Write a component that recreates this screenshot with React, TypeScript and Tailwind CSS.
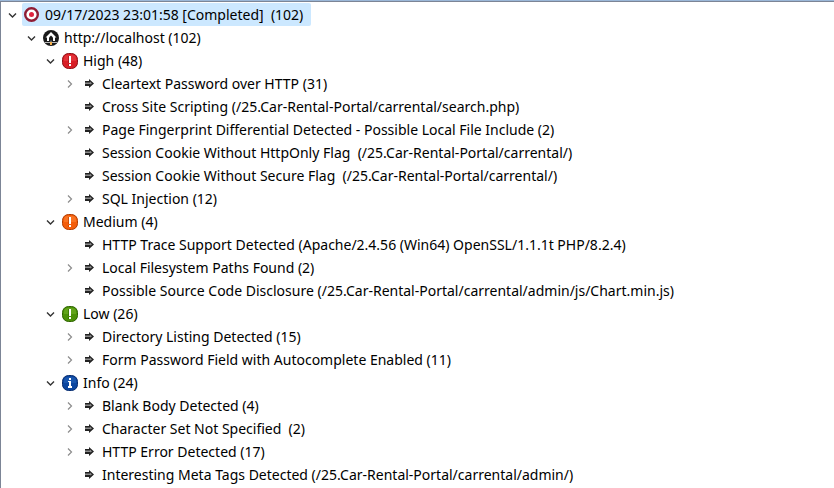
import { useState } from "react";

type IconName = "scan" | "host" | "high" | "medium" | "low" | "info" | "finding";

interface TreeNode {
  label: string;
  icon: IconName;
  expandable?: boolean;
  selected?: boolean;
  children?: TreeNode[];
}

const finding = (label: string, expandable = false): TreeNode => ({ label, icon: "finding", expandable });

const scan: TreeNode = {
  label: "09/17/2023 23:01:58 [Completed]  (102)",
  icon: "scan",
  selected: true,
  children: [
    {
      label: "http://localhost (102)",
      icon: "host",
      children: [
        {
          label: "High (48)",
          icon: "high",
          children: [
            finding("Cleartext Password over HTTP (31)", true),
            finding("Cross Site Scripting (/25.Car-Rental-Portal/carrental/search.php)"),
            finding("Page Fingerprint Differential Detected - Possible Local File Include (2)", true),
            finding("Session Cookie Without HttpOnly Flag  (/25.Car-Rental-Portal/carrental/)"),
            finding("Session Cookie Without Secure Flag  (/25.Car-Rental-Portal/carrental/)"),
            finding("SQL Injection (12)", true),
          ],
        },
        {
          label: "Medium (4)",
          icon: "medium",
          children: [
            finding("HTTP Trace Support Detected (Apache/2.4.56 (Win64) OpenSSL/1.1.1t PHP/8.2.4)"),
            finding("Local Filesystem Paths Found (2)", true),
            finding("Possible Source Code Disclosure (/25.Car-Rental-Portal/carrental/admin/js/Chart.min.js)"),
          ],
        },
        {
          label: "Low (26)",
          icon: "low",
          children: [
            finding("Directory Listing Detected (15)", true),
            finding("Form Password Field with Autocomplete Enabled (11)", true),
          ],
        },
        {
          label: "Info (24)",
          icon: "info",
          children: [
            finding("Blank Body Detected (4)", true),
            finding("Character Set Not Specified  (2)", true),
            finding("HTTP Error Detected (17)", true),
            finding("Interesting Meta Tags Detected (/25.Car-Rental-Portal/carrental/admin/)"),
          ],
        },
      ],
    },
  ],
};

function Badge({ light, base, dark }: { light: string; base: string; dark: string }) {
  return (
    <>
      <rect x="0.5" y="0.5" width="15" height="15" rx="6" fill={base} stroke={dark} />
      <path d="M2 8V6q0-4 4-4h4q4 0 4 4v2z" fill={light} opacity="0.5" />
    </>
  );
}

function Severity(colors: { light: string; base: string; dark: string }) {
  return (
    <>
      <Badge {...colors} />
      <path d="M6 3h1v7H6zM6 11h1v2H6z" fill={colors.dark} opacity="0.6" />
      <path d="M7 3h2v7H7zM7 11h2v2H7z" fill="#fff" />
    </>
  );
}

function Icon({ name }: { name: IconName }) {
  return (
    <svg className="size-4 shrink-0" viewBox="0 0 16 16" aria-hidden="true">
      {name === "scan" && (
        <>
          <circle cx="7.500" cy="7.500" r="6.300" fill="#fff" stroke="#8f1c34" strokeWidth="2.400" />
          <circle cx="7.500" cy="7.500" r="2.500" fill="#e0233f" />
        </>
      )}
      {name === "host" && (
        <>
          <circle cx="8" cy="8" r="8" fill="#1a1a1a" />
          <path d="M8 2 2.500 7.500H4V11h8V7.500h1.500z" fill="#fff" />
          <path d="M8 5.500 6 7.500V11h4V7.500z" fill="#1a1a1a" />
          <path d="M2 12.500h12M8 10.500v2" stroke="#b9b9b9" />
          <rect x="7" y="12" width="2" height="3" fill="#f5b04c" />
        </>
      )}
      {name === "high" && <Severity light="#f0444a" base="#d81e26" dark="#8f1016" />}
      {name === "medium" && <Severity light="#ff8a3a" base="#f45d0a" dark="#b13c00" />}
      {name === "low" && <Severity light="#78b82c" base="#4c9108" dark="#2f6400" />}
      {name === "info" && (
        <>
          <Badge light="#2867bd" base="#0b459f" dark="#092e70" />
          <path d="M7 3h2v2H7zM6 6h3v5h1v2H6v-2h1V7H6z" fill="#fff" />
        </>
      )}
      {name === "finding" && (
        <>
          <path d="M4 5h4V3l5 4.500L8 12v-2H4z" fill="#222" />
          <path d="M4 6.500h5V5.500l2 2-2 1V8H4z" fill="#8c8c8c" />
        </>
      )}
    </svg>
  );
}

function Chevron({ open }: { open: boolean }) {
  return (
    <svg className="size-4" viewBox="0 0 16 16" fill="none" aria-hidden="true">
      {open ? (
        <path d="M5 6.500 8.500 10 12 6.500" stroke="#333" strokeWidth="1.400" />
      ) : (
        <path d="M7 4.500 10.500 8 7 11.500" stroke="#8c8c8c" strokeWidth="1.200" />
      )}
    </svg>
  );
}

function TreeItem({ node }: { node: TreeNode }) {
  const [open, setOpen] = useState(Boolean(node.children));
  const canToggle = Boolean(node.children) || Boolean(node.expandable);

  return (
    <li role="treeitem" aria-expanded={canToggle ? open : undefined} aria-selected={Boolean(node.selected)}>
      <div className="flex h-[23px] items-center">
        {canToggle ? (
          <button type="button" aria-label={`Toggle ${node.label}`} onClick={() => setOpen(!open)} className="mr-0.5 size-4 shrink-0">
            <Chevron open={open} />
          </button>
        ) : (
          <span className="mr-0.5 size-4 shrink-0" />
        )}
        <span className={`flex h-full items-center gap-1 rounded-xs pr-2 pl-0.5 ${node.selected ? "bg-[#cce8ff]" : ""}`}>
          <Icon name={node.icon} />
          <span className="pl-px whitespace-pre">{node.label}</span>
        </span>
      </div>
      {open && node.children && (
        <ul role="group" className="pl-[19px]">
          {node.children.map((child) => (
            <TreeItem key={child.label} node={child} />
          ))}
        </ul>
      )}
    </li>
  );
}

export default function App() {
  return (
    <main className="min-h-screen overflow-hidden border-t border-[#9ab7d8] bg-white font-['Segoe_UI','Noto_Sans',sans-serif] text-sm text-black">
      <div className="min-h-screen border-t border-l border-[#7c8596] pt-px pl-[3px]">
        <ul role="tree" aria-label="Scan results">
          <TreeItem node={scan} />
        </ul>
      </div>
    </main>
  );
}
